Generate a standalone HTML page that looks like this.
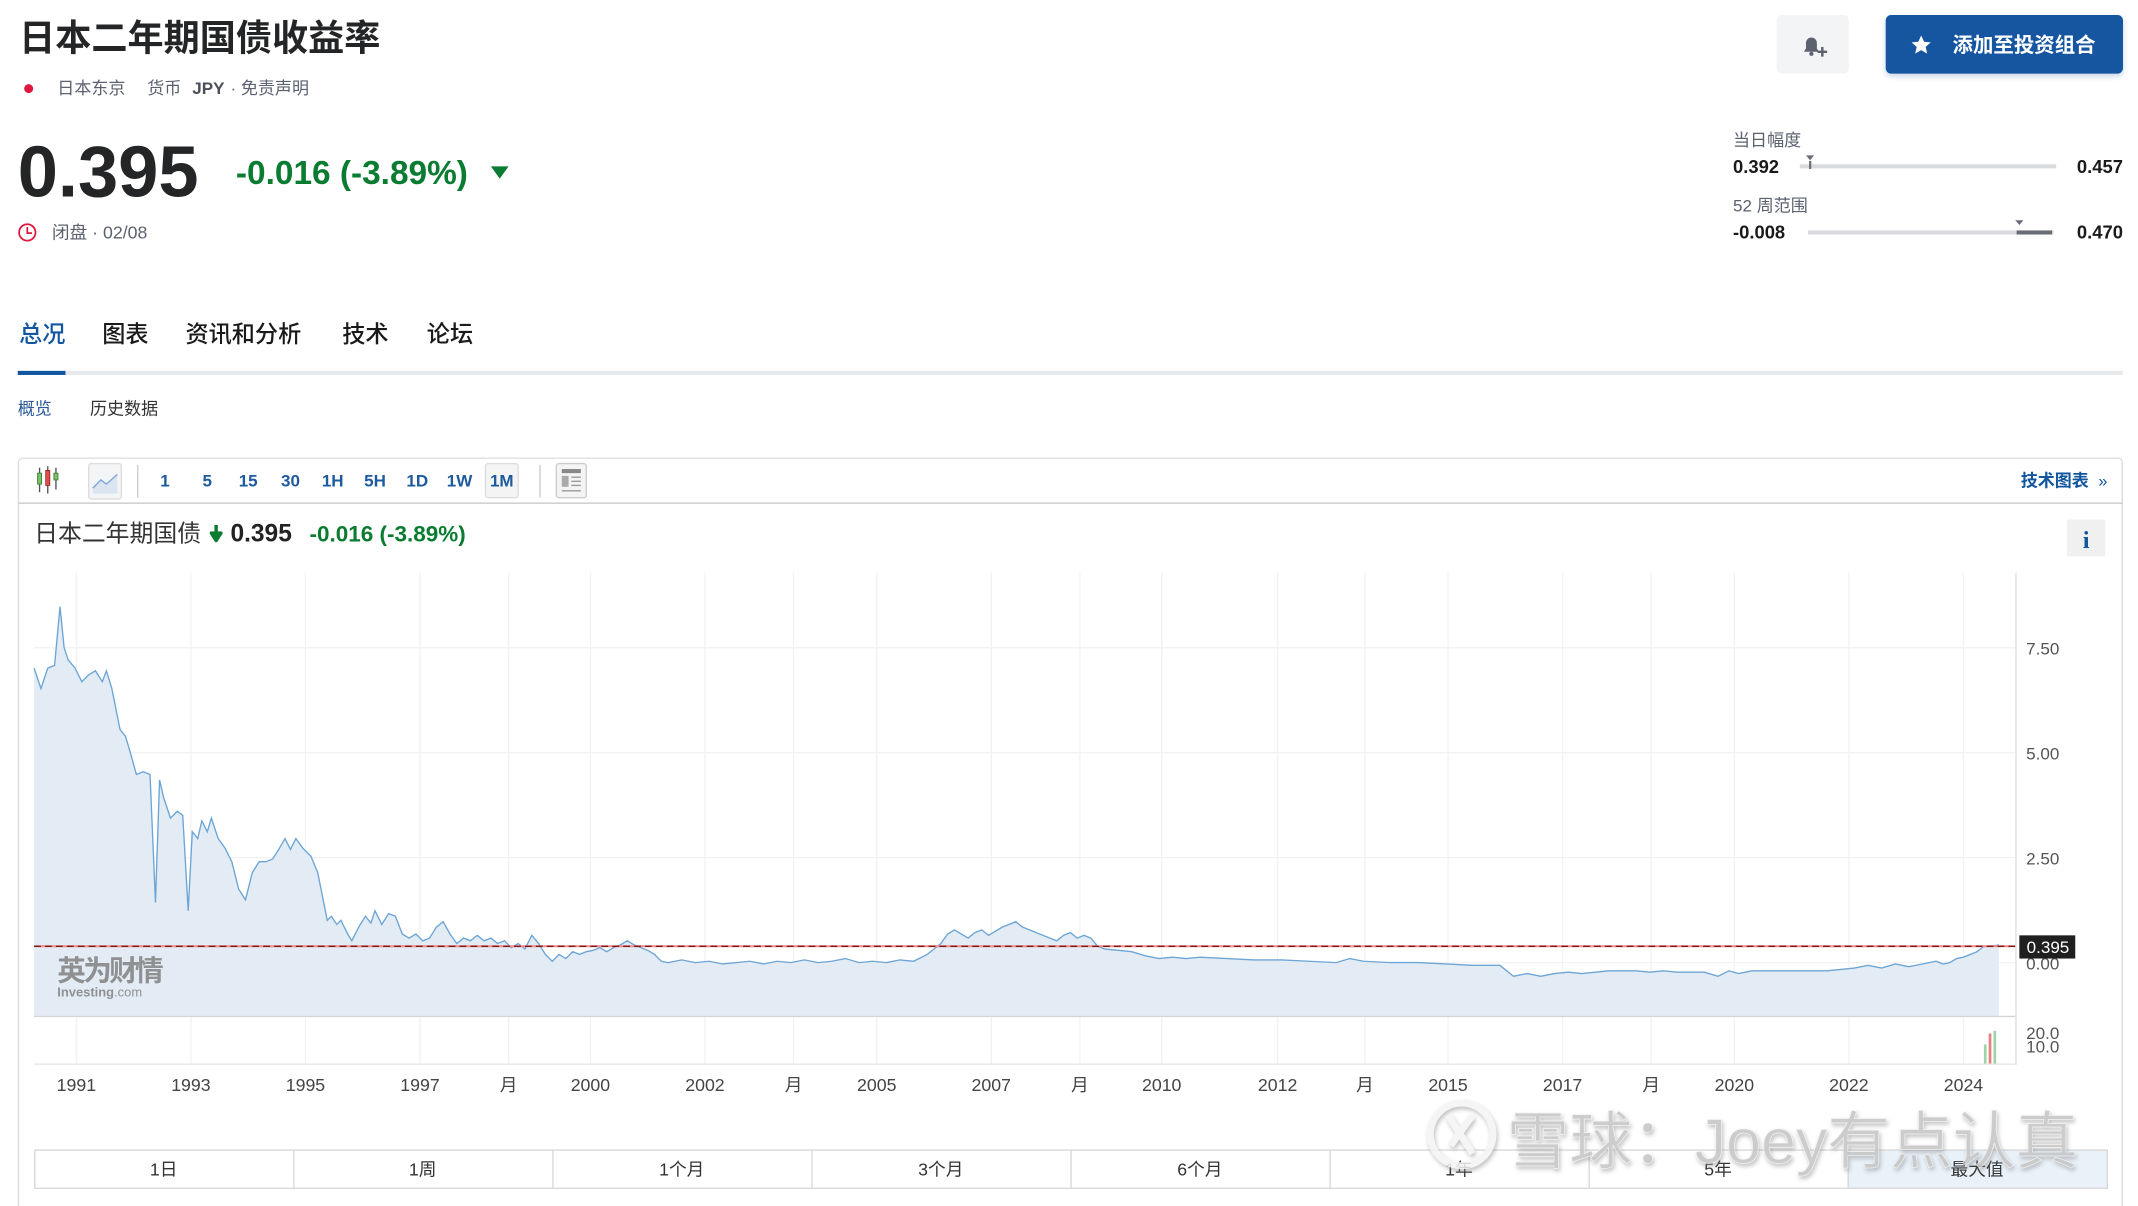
<!DOCTYPE html>
<html><head><meta charset="utf-8"><style>
html,body{margin:0;padding:0;background:#fff;overflow:hidden}
svg{display:block}
text{font-family:"Liberation Sans","Noto Sans CJK SC",sans-serif}
</style></head><body>
<svg width="2138" height="1206" viewBox="0 0 1568 884.5" xmlns="http://www.w3.org/2000/svg">
<defs><filter id="sh" x="-10%" y="-20%" width="120%" height="160%"><feDropShadow dx="0" dy="2" stdDeviation="2" flood-color="#1256a0" flood-opacity="0.25"/></filter>
<filter id="wm"><feDropShadow dx="1" dy="2" stdDeviation="1.5" flood-color="#888" flood-opacity="0.6"/></filter>
<path id="ln" d="M25 490 L30 505 L35 490 L40 488 L44 445 L47 475 L50 484 L55 490 L60 500 L65 495 L70 492 L75 500 L78 492 L82 505 L88 535 L92 540 L95 550 L100 568 L105 566 L110 568 L114 662 L117 572 L120 585 L125 600 L130 595 L134 598 L138 668 L141 610 L145 615 L148 602 L152 610 L155 600 L160 615 L165 622 L170 632 L175 652 L180 660 L185 640 L190 632 L195 632 L200 630 L205 622 L209 615 L213 623 L217 615 L222 622 L228 628 L233 640 L237 660 L240 675 L243 672 L247 678 L250 675 L255 685 L258 690 L263 680 L268 672 L272 677 L275 668 L280 678 L285 670 L290 672 L295 685 L300 688 L305 685 L310 690 L315 688 L320 680 L325 676 L330 685 L335 692 L340 688 L345 690 L350 686 L355 690 L360 688 L365 692 L370 690 L375 695 L380 692 L385 696 L390 686 L395 692 L400 700 L405 705 L410 700 L415 703 L420 698 L425 700 L430 698 L435 697 L440 695 L445 698 L450 695 L455 693 L460 690 L465 693 L470 695 L475 697 L480 700 L485 705 L490 706 L500 704 L510 706 L520 705 L530 707 L540 706 L550 705 L560 707 L570 705 L580 706 L590 704 L600 706 L610 705 L620 703 L630 706 L640 705 L650 706 L660 704 L670 705 L680 700 L690 692 L695 685 L700 682 L705 685 L710 688 L715 684 L720 682 L725 686 L730 683 L735 680 L740 678 L745 676 L750 680 L755 682 L760 684 L765 686 L770 688 L775 690 L780 686 L785 684 L790 688 L795 686 L800 688 L805 694 L810 696 L820 697 L830 698 L840 701 L850 703 L860 702 L870 703 L880 702 L900 703 L920 704 L940 704 L960 705 L980 706 L990 703 L1000 705 L1020 706 L1040 706 L1060 707 L1080 708 L1100 708 L1105 712 L1110 716 L1120 714 L1130 716 L1140 714 L1150 713 L1160 714 L1170 713 L1180 712 L1190 712 L1200 712 L1210 713 L1220 712 L1230 713 L1240 713 L1250 713 L1260 716 L1268 712 L1275 714 L1285 712 L1300 712 L1320 712 L1340 712 L1350 711 L1360 710 L1370 708 L1380 710 L1390 707 L1400 709 L1410 707 L1420 705 L1425 707 L1430 706 L1435 703 L1440 702 L1445 700 L1450 698 L1455 694 L1460 694 L1466 693"/>
</defs>
<rect width="1568" height="885" fill="#fff"/>
<!-- header -->
<text x="14" y="37" font-size="26.5" font-weight="bold" fill="#232526">日本二年期国债收益率</text>
<circle cx="21" cy="65" r="3.3" fill="#e0173c"/>
<text x="42" y="69" font-size="12.5" fill="#5b616e">日本东京</text>
<text x="108" y="69" font-size="12.5" fill="#5b616e">货币</text>
<text x="141" y="69" font-size="12.5" font-weight="bold" fill="#4a4f5a">JPY</text>
<text x="169" y="69" font-size="12.5" fill="#5b616e">· 免责声明</text>
<text x="13" y="144" font-size="53" font-weight="bold" fill="#232526">0.395</text>
<text x="173" y="135" font-size="24.5" font-weight="bold" fill="#0a7c31">-0.016 (-3.89%)</text>
<polygon points="360,122 373,122 366.5,131" fill="#0a7c31"/>
<circle cx="20" cy="170.5" r="6" fill="none" stroke="#e0173c" stroke-width="1.3"/>
<path d="M20 166.5 V171 H23.5" fill="none" stroke="#e0173c" stroke-width="1.3"/>
<text x="38" y="175" font-size="13" fill="#5b616e">闭盘 · 02/08</text>
<!-- buttons -->
<rect x="1303" y="11" width="53" height="43" rx="4" fill="#f3f4f5"/>
<path d="M1323 38 L1324.5 35.5 V31.5 a4 4 0 0 1 8 0 V35.5 L1334 38 Z" fill="#5d6270"/>
<circle cx="1328.5" cy="39.5" r="1.5" fill="#5d6270"/>
<path d="M1333 38 h7 M1336.5 34.5 v7" stroke="#5d6270" stroke-width="1.8"/>
<rect x="1383" y="11" width="174" height="43" rx="4" fill="#1256a0" filter="url(#sh)"/>
<polygon points="1409,26 1411.1,30.6 1416,31.1 1412.3,34.4 1413.4,39.3 1409,36.8 1404.6,39.3 1405.7,34.4 1402,31.1 1406.9,30.6" fill="#fff"/>
<text x="1432" y="38" font-size="15" font-weight="bold" fill="#fff">添加至投资组合</text>
<!-- ranges -->
<text x="1271" y="107" font-size="12.5" fill="#5b616e">当日幅度</text>
<text x="1271" y="127" font-size="13.5" font-weight="bold" fill="#1a1a1a">0.392</text>
<rect x="1320" y="120.5" width="188" height="3" fill="#d9dadd"/>
<polygon points="1324.5,114 1330.5,114 1327.5,117.5" fill="#6a6d78"/>
<rect x="1326.8" y="118" width="1.6" height="6" fill="#6a6d78"/>
<text x="1557" y="127" font-size="13.5" font-weight="bold" fill="#1a1a1a" text-anchor="end">0.457</text>
<text x="1271" y="155" font-size="12.5" fill="#5b616e">52 周范围</text>
<text x="1271" y="175" font-size="13.5" font-weight="bold" fill="#1a1a1a">-0.008</text>
<rect x="1326" y="169" width="180" height="3" fill="#d9dadd"/>
<rect x="1479" y="169" width="26" height="3" fill="#6a6d78"/>
<polygon points="1478,161.5 1484,161.5 1481,165" fill="#6a6d78"/>
<text x="1557" y="175" font-size="13.5" font-weight="bold" fill="#1a1a1a" text-anchor="end">0.470</text>
<!-- tabs -->
<g font-size="17" font-weight="500">
<text x="14" y="251" fill="#1256a0">总况</text>
<text x="75" y="251" fill="#1a1a1a">图表</text>
<text x="136" y="251" fill="#1a1a1a">资讯和分析</text>
<text x="251" y="251" fill="#1a1a1a">技术</text>
<text x="313" y="251" fill="#1a1a1a">论坛</text>
</g>
<rect x="13" y="272" width="1544" height="3" fill="#e6e9eb"/>
<rect x="13" y="272" width="35" height="3" fill="#1256a0"/>
<text x="13" y="304" font-size="12.5" fill="#2a5a9a">概览</text>
<text x="66" y="304" font-size="12.5" fill="#333">历史数据</text>
<!-- chart box -->
<path d="M13.5 890 V339 a3 3 0 0 1 3 -3 H1553.5 a3 3 0 0 1 3 3 V890" fill="none" stroke="#dcdcdc"/>
<line x1="13.5" y1="369" x2="1556.5" y2="369" stroke="#c4c4c4"/>
<g stroke="#555" stroke-width="1"><line x1="29" y1="343" x2="29" y2="361"/><line x1="35" y1="342" x2="35" y2="362"/><line x1="41" y1="343" x2="41" y2="359"/></g>
<rect x="27.5" y="347" width="3" height="8" fill="#7ac06b" stroke="#3a7a30" stroke-width=".6"/>
<rect x="33.5" y="345" width="3" height="11" fill="#e05050" stroke="#902020" stroke-width=".6"/>
<rect x="39.5" y="347" width="3" height="5" fill="#7ac06b" stroke="#3a7a30" stroke-width=".6"/>
<rect x="65" y="340" width="24" height="26" rx="2" fill="#f3f4f6" stroke="#ddd"/>
<path d="M68 358 L74 352 L78 355 L86 348 V362 H68 Z" fill="#dbe5f2"/>
<path d="M68 358 L74 352 L78 355 L86 348" fill="none" stroke="#7fa6d4" stroke-width="1"/>
<line x1="101" y1="341" x2="101" y2="365" stroke="#ccc"/>
<rect x="356" y="340" width="24" height="25" rx="2" fill="#f4f4f4" stroke="#ddd"/>
<g font-size="12.5" font-weight="bold" fill="#1e5a9e" text-anchor="middle">
<text x="121" y="357">1</text><text x="152" y="357">5</text><text x="182" y="357">15</text><text x="213" y="357">30</text><text x="244" y="357">1H</text><text x="275" y="357">5H</text><text x="306" y="357">1D</text><text x="337" y="357">1W</text><text x="368" y="357">1M</text></g>
<line x1="396" y1="341" x2="396" y2="365" stroke="#ccc"/>
<rect x="408" y="340" width="22" height="25" rx="2" fill="#f4f4f4" stroke="#ccc"/>
<rect x="412" y="344" width="14" height="3" fill="#888"/>
<rect x="412" y="349" width="5" height="8" fill="#aaa"/>
<g stroke="#999" stroke-width="1"><line x1="419" y1="350" x2="426" y2="350"/><line x1="419" y1="353" x2="426" y2="353"/><line x1="419" y1="356" x2="426" y2="356"/><line x1="412" y1="360" x2="426" y2="360"/></g>
<text x="1482" y="357" font-size="12.5" font-weight="bold" fill="#1256a0">技术图表</text>
<text x="1539" y="357" font-size="12" fill="#1256a0">»</text>
<!-- chart title -->
<text x="25" y="397" font-size="17.5" fill="#333">日本二年期国债</text>
<path d="M158.5 385 V391 H155 L158.5 396.5 L162 391 H158.5" fill="#0a7c31" stroke="#0a7c31" stroke-width="2.5" stroke-linejoin="round"/>
<text x="169" y="397" font-size="18" font-weight="bold" fill="#222">0.395</text>
<text x="227" y="397" font-size="16.5" font-weight="bold" fill="#0a7c31">-0.016 (-3.89%)</text>
<rect x="1516" y="381" width="28" height="27" fill="#f0f0f0"/>
<text x="1530" y="402" font-size="18" font-weight="bold" fill="#1256a0" text-anchor="middle" style="font-family:'Liberation Serif',serif">i</text>
<!-- grid -->
<g stroke="#f1f2f4" stroke-width="1">
<line x1="56" y1="420" x2="56" y2="780"/><line x1="140" y1="420" x2="140" y2="780"/><line x1="224" y1="420" x2="224" y2="780"/><line x1="308" y1="420" x2="308" y2="780"/><line x1="373" y1="420" x2="373" y2="780"/><line x1="433" y1="420" x2="433" y2="780"/><line x1="517" y1="420" x2="517" y2="780"/><line x1="582" y1="420" x2="582" y2="780"/><line x1="643" y1="420" x2="643" y2="780"/><line x1="727" y1="420" x2="727" y2="780"/><line x1="792" y1="420" x2="792" y2="780"/><line x1="852" y1="420" x2="852" y2="780"/><line x1="937" y1="420" x2="937" y2="780"/><line x1="1001" y1="420" x2="1001" y2="780"/><line x1="1062" y1="420" x2="1062" y2="780"/><line x1="1146" y1="420" x2="1146" y2="780"/><line x1="1211" y1="420" x2="1211" y2="780"/><line x1="1272" y1="420" x2="1272" y2="780"/><line x1="1356" y1="420" x2="1356" y2="780"/><line x1="1440" y1="420" x2="1440" y2="780"/>
<line x1="25" y1="475" x2="1478" y2="475"/><line x1="25" y1="552" x2="1478" y2="552"/><line x1="25" y1="629" x2="1478" y2="629"/><line x1="25" y1="706" x2="1478" y2="706"/>
</g>
<path d="M25 490 L30 505 L35 490 L40 488 L44 445 L47 475 L50 484 L55 490 L60 500 L65 495 L70 492 L75 500 L78 492 L82 505 L88 535 L92 540 L95 550 L100 568 L105 566 L110 568 L114 662 L117 572 L120 585 L125 600 L130 595 L134 598 L138 668 L141 610 L145 615 L148 602 L152 610 L155 600 L160 615 L165 622 L170 632 L175 652 L180 660 L185 640 L190 632 L195 632 L200 630 L205 622 L209 615 L213 623 L217 615 L222 622 L228 628 L233 640 L237 660 L240 675 L243 672 L247 678 L250 675 L255 685 L258 690 L263 680 L268 672 L272 677 L275 668 L280 678 L285 670 L290 672 L295 685 L300 688 L305 685 L310 690 L315 688 L320 680 L325 676 L330 685 L335 692 L340 688 L345 690 L350 686 L355 690 L360 688 L365 692 L370 690 L375 695 L380 692 L385 696 L390 686 L395 692 L400 700 L405 705 L410 700 L415 703 L420 698 L425 700 L430 698 L435 697 L440 695 L445 698 L450 695 L455 693 L460 690 L465 693 L470 695 L475 697 L480 700 L485 705 L490 706 L500 704 L510 706 L520 705 L530 707 L540 706 L550 705 L560 707 L570 705 L580 706 L590 704 L600 706 L610 705 L620 703 L630 706 L640 705 L650 706 L660 704 L670 705 L680 700 L690 692 L695 685 L700 682 L705 685 L710 688 L715 684 L720 682 L725 686 L730 683 L735 680 L740 678 L745 676 L750 680 L755 682 L760 684 L765 686 L770 688 L775 690 L780 686 L785 684 L790 688 L795 686 L800 688 L805 694 L810 696 L820 697 L830 698 L840 701 L850 703 L860 702 L870 703 L880 702 L900 703 L920 704 L940 704 L960 705 L980 706 L990 703 L1000 705 L1020 706 L1040 706 L1060 707 L1080 708 L1100 708 L1105 712 L1110 716 L1120 714 L1130 716 L1140 714 L1150 713 L1160 714 L1170 713 L1180 712 L1190 712 L1200 712 L1210 713 L1220 712 L1230 713 L1240 713 L1250 713 L1260 716 L1268 712 L1275 714 L1285 712 L1300 712 L1320 712 L1340 712 L1350 711 L1360 710 L1370 708 L1380 710 L1390 707 L1400 709 L1410 707 L1420 705 L1425 707 L1430 706 L1435 703 L1440 702 L1445 700 L1450 698 L1455 694 L1460 694 L1466 693 L1466 745 L25 745 Z" fill="#e3ecf4"/>
<use href="#ln" fill="none" stroke="#6da5d5" stroke-width="1"/>
<text x="42" y="719" font-size="21" font-weight="bold" fill="#7a7a7a" opacity=".8" letter-spacing="-2">英为财情</text>
<text x="42" y="731" font-size="9.5" font-weight="bold" fill="#7a7a7a" opacity=".8">Investing<tspan font-weight="normal">.com</tspan></text>
<line x1="25" y1="694" x2="1478" y2="694" stroke="#f08a8a" stroke-width="1.5"/>
<line x1="25" y1="694" x2="1478" y2="694" stroke="#7a1a1a" stroke-width="1" stroke-dasharray="5,3"/>
<line x1="25" y1="745.5" x2="1478" y2="745.5" stroke="#d4d4d4"/>
<line x1="25" y1="780.5" x2="1478" y2="780.5" stroke="#e4e4e4"/>
<line x1="1478.5" y1="420" x2="1478.5" y2="781" stroke="#e0e0e0"/>
<rect x="1455" y="766" width="2" height="14" fill="#9fd3a8"/>
<rect x="1458.5" y="758" width="2" height="22" fill="#e88080"/>
<rect x="1462" y="756" width="2" height="24" fill="#9fd3a8"/>
<g font-size="12.5" fill="#555">
<text x="1486" y="480">7.50</text><text x="1486" y="557">5.00</text><text x="1486" y="634">2.50</text><text x="1486" y="711">0.00</text><text x="1486" y="762">20.0</text><text x="1486" y="772">10.0</text></g>
<rect x="1481" y="686" width="41" height="17" fill="#1f1f1f"/>
<text x="1502" y="699" font-size="12.5" fill="#fff" text-anchor="middle">0.395</text>
<g font-size="13" fill="#444" text-anchor="middle">
<text x="56" y="800">1991</text><text x="140" y="800">1993</text><text x="224" y="800">1995</text><text x="308" y="800">1997</text><text x="373" y="800">月</text><text x="433" y="800">2000</text><text x="517" y="800">2002</text><text x="582" y="800">月</text><text x="643" y="800">2005</text><text x="727" y="800">2007</text><text x="792" y="800">月</text><text x="852" y="800">2010</text><text x="937" y="800">2012</text><text x="1001" y="800">月</text><text x="1062" y="800">2015</text><text x="1146" y="800">2017</text><text x="1211" y="800">月</text><text x="1272" y="800">2020</text><text x="1356" y="800">2022</text><text x="1440" y="800">2024</text></g>
<rect x="1355" y="843" width="190" height="28" fill="#e9f1f9"/>
<rect x="25.5" y="843.5" width="1520" height="28" fill="none" stroke="#d8d8d8"/>
<g stroke="#d8d8d8"><line x1="215.5" y1="843" x2="215.5" y2="871"/><line x1="405.5" y1="843" x2="405.5" y2="871"/><line x1="595.5" y1="843" x2="595.5" y2="871"/><line x1="785.5" y1="843" x2="785.5" y2="871"/><line x1="975.5" y1="843" x2="975.5" y2="871"/><line x1="1165.5" y1="843" x2="1165.5" y2="871"/><line x1="1355.5" y1="843" x2="1355.5" y2="871"/></g>
<g font-size="13" fill="#333" text-anchor="middle">
<text x="120" y="862">1日</text><text x="310" y="862">1周</text><text x="500" y="862">1个月</text><text x="690" y="862">3个月</text><text x="880" y="862">6个月</text><text x="1070" y="862">1年</text><text x="1260" y="862">5年</text><text x="1450" y="862">最大值</text></g>
<g filter="url(#wm)" opacity=".85">
<circle cx="1072" cy="832" r="23" fill="none" stroke="#f4f4f4" stroke-width="5"/>
<path d="M1062 818 L1080 846 M1080 818 L1064 840" stroke="#f4f4f4" stroke-width="5" fill="none"/>
<text x="1105" y="853" font-size="46" fill="#c4c4c4" stroke="#f0f0f0" stroke-width=".5">雪球：Joey有点认真</text>
</g>
</svg>
</body></html>
